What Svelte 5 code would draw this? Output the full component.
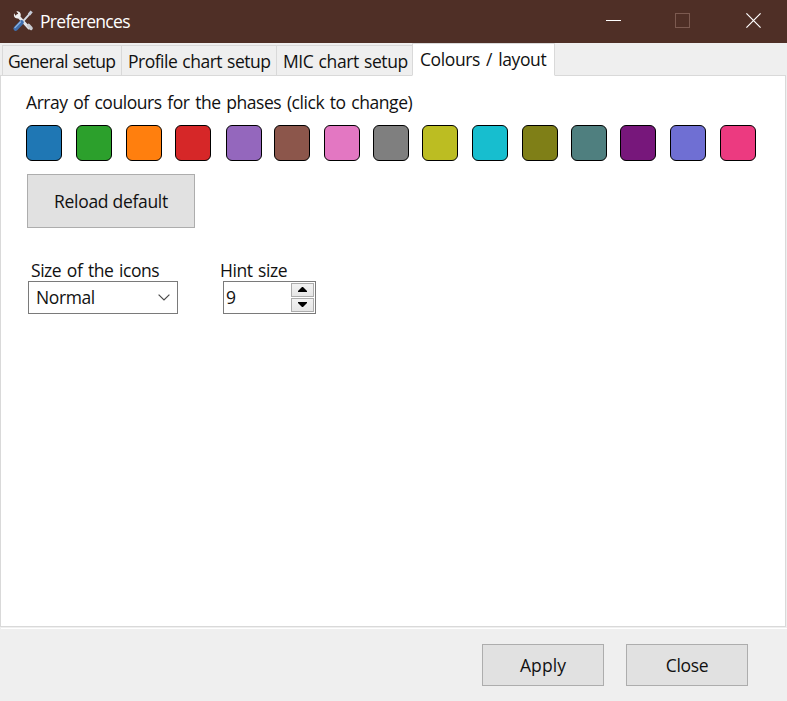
<script>
  const colours = [
    '#1f77b4', '#2ca02c', '#ff7f0e', '#d62728', '#9467bd',
    '#8c564b', '#e377c2', '#7f7f7f', '#bcbd22', '#17becf',
    '#7f7f17', '#4f7f7f', '#77177b', '#6f6fd3', '#ec3a80'
  ];
  const tabs = [
    { id: 'general', label: 'General setup' },
    { id: 'profile', label: 'Profile chart setup' },
    { id: 'mic', label: 'MIC chart setup' },
    { id: 'colours', label: 'Colours / layout' }
  ];
  let active = $state('colours');
  let hint = $state(9);
</script>

<div class="window">
  <header class="titlebar">
    <svg class="tools" width="22" height="22" viewBox="0 0 22 22">
      <path d="M5.5 5.5 17 18" stroke="#e4e6ea" stroke-width="3" stroke-linecap="round" />
      <path d="M2.2 3.2C1 6.4 3.4 9.2 6.6 8.2L8.6 6.2C9.4 3.4 7.4 1 4.4 1.4L6.2 3.6 5.2 5.4 3.4 5.4Z" fill="#f1f1f1" />
      <path d="M16.5 15.5 19 18.3" stroke="#c9ccd2" stroke-width="3.6" stroke-linecap="round" />
      <path d="M18.6 2.8 10.5 11.8" stroke="#d5dbe4" stroke-width="2" />
      <path d="M19.6 1.4 17 4.6" stroke="#c6ccd8" stroke-width="3" />
      <path d="M9.6 12.4 3.6 18.6" stroke="#3f6fae" stroke-width="4.4" stroke-linecap="round" />
      <path d="M8.4 12 3 17.6" stroke="#8fb5e2" stroke-width="1.2" stroke-linecap="round" />
    </svg>
    <span class="title">Preferences</span>
    <div class="controls">
      <svg width="15" height="15" viewBox="0 0 15 15"><path d="M0 7.5H15" stroke="#fff" /></svg>
      <svg width="15" height="15" viewBox="0 0 15 15"><rect x=".5" y=".5" width="14" height="14" fill="none" stroke="#7c5a50" /></svg>
      <svg class="x" width="15" height="15" viewBox="0 0 15 15"><path d="M.4.4 14.6 14.6M14.6.4.4 14.6" stroke="#fff" stroke-width="1.2" /></svg>
    </div>
  </header>

  <nav class="tabs">
    {#each tabs as tab (tab.id)}
      <button class="tab {tab.id}" class:active={active === tab.id} onclick={() => (active = tab.id)}>
        <span>{tab.label}</span>
      </button>
    {/each}
  </nav>

  <main class="panel">
    <p class="heading">Array of coulours for the phases (click to change)</p>
    <div class="swatches">
      {#each colours as c}
        <button class="swatch" style="background:{c}" aria-label={c}></button>
      {/each}
    </div>
    <button class="push reload"><span>Reload default</span></button>
    <div class="fields">
      <div class="field size">
        <span class="label">Size of the icons</span>
        <div class="box select">
          <span class="value">Normal</span>
          <svg width="12" height="7" viewBox="0 0 12 7"><path d="M.6.6 6 5.9 11.4.6" fill="none" stroke="#4a4a4a" stroke-width="1.2" /></svg>
        </div>
      </div>
      <div class="field hint">
        <span class="label">Hint size</span>
        <div class="box spin">
          <span class="value">{hint}</span>
          <div class="arrows">
            <button aria-label="Increase" onclick={() => hint++}>
              <svg width="9" height="5" viewBox="0 0 9 5"><path d="M4 0H5L9 4V5H0V4Z" /></svg>
            </button>
            <button aria-label="Decrease" onclick={() => hint--}>
              <svg width="9" height="5" viewBox="0 0 9 5"><path d="M0 0H9V1L5 5H4L0 1Z" /></svg>
            </button>
          </div>
        </div>
      </div>
    </div>
  </main>

  <footer class="actions">
    <button class="push apply"><span>Apply</span></button>
    <button class="push"><span>Close</span></button>
  </footer>
</div>

<style>
  .window {
    width: 787px;
    height: 701px;
    display: flex;
    flex-direction: column;
    background: #efefef;
    color: #111;
    font: 17.5px/24px 'Open Sans', 'Noto Sans', sans-serif;
    white-space: nowrap;
    overflow: hidden;
  }
  .window * { box-sizing: border-box; }
  button {
    font: inherit;
    color: inherit;
    letter-spacing: inherit;
    padding: 0;
    margin: 0;
    border-radius: 0;
  }
  svg { display: block; flex: none; }
  .titlebar {
    height: 43px;
    flex: none;
    display: flex;
    align-items: center;
    padding: 0 26px 0 12px;
    background: #4f2f26;
    color: #fff;
  }
  .tools { margin-top: -2px; }
  .title { margin: -2px 0 0 6px; letter-spacing: -0.7px; }
  .controls { display: flex; gap: 54px; margin: -2px 0 0 auto; }
  .x { margin-left: 2px; }
  .tabs {
    height: 33px;
    flex: none;
    display: flex;
    align-items: flex-end;
    padding-left: 2px;
    margin-bottom: -1px;
    z-index: 1;
  }
  .tab {
    height: 31px;
    background: #efefef;
    border: 1px solid #d9d9d9;
    border-right: 0;
    padding: 0 0 0 5px;
    text-align: left;
    letter-spacing: -0.5px;
    word-spacing: 1px;
  }
  .general { width: 119px; letter-spacing: -0.65px; }
  .profile { width: 155px; padding-left: 6px; }
  .mic { width: 136px; padding-left: 6px; letter-spacing: -0.4px; }
  .colours { width: 143px; border-right: 1px solid #d9d9d9; letter-spacing: -0.4px; word-spacing: 2px; }
  .tab.active {
    height: 33px;
    background: #fff;
    border-bottom-color: #fff;
    padding: 0 0 2px 7px;
  }
  .panel {
    height: 552px;
    width: 786px;
    flex: none;
    padding: 14px 0 0 25px;
    background: #fff;
    border: 1px solid #d9d9d9;
  }
  .heading { margin: 0; height: 35px; letter-spacing: -0.44px; word-spacing: 1.5px; }
  .swatches {
    display: grid;
    grid-template-columns: 50px 50px 49px 51px 48px 50px 49px 49px 50px 50px 49px 49px 50px 50px 36px;
  }
  .swatch { width: 36px; height: 36px; border: 1px solid #000; border-radius: 6px; }
  .push {
    width: 122px;
    height: 42px;
    background: #e1e1e1;
    border: 1px solid #adadad;
    letter-spacing: -0.3px;
  }
  .apply { letter-spacing: 0.1px; }
  .reload { display: block; width: 168px; height: 54px; margin: 13px 0 0 1px; }
  .fields { display: flex; margin-top: 30px; }
  .field { display: flex; flex-direction: column; }
  .label { height: 23px; letter-spacing: -0.45px; word-spacing: 1.5px; }
  .size { width: 192px; padding-left: 2px; }
  .size .label { padding-left: 3px; }
  .hint .label { padding-left: 2px; }
  .box {
    display: flex;
    align-items: center;
    height: 33px;
    border: 1px solid #7a7a7a;
    background: #fff;
    letter-spacing: -0.4px;
  }
  .value { margin-top: -2px; }
  .select { width: 150px; justify-content: space-between; padding: 0 7px 0 7px; }
  .spin { width: 93px; margin-left: 5px; justify-content: space-between; padding: 0 1px 0 2px; }
  .arrows { display: flex; flex-direction: column; gap: 1px; }
  .arrows button {
    display: flex;
    align-items: center;
    justify-content: center;
    width: 23px;
    height: 14px;
    padding-bottom: 1px;
    background: linear-gradient(#f2f2f2, #e6e6e6);
    border: 1px solid #acacac;
  }
  .actions {
    flex: 1;
    display: flex;
    gap: 22px;
    margin: 1px 0 0 1px;
    border-top: 1px solid #fff;
    padding: 15px 39px 0 0;
    justify-content: flex-end;
  }
</style>
